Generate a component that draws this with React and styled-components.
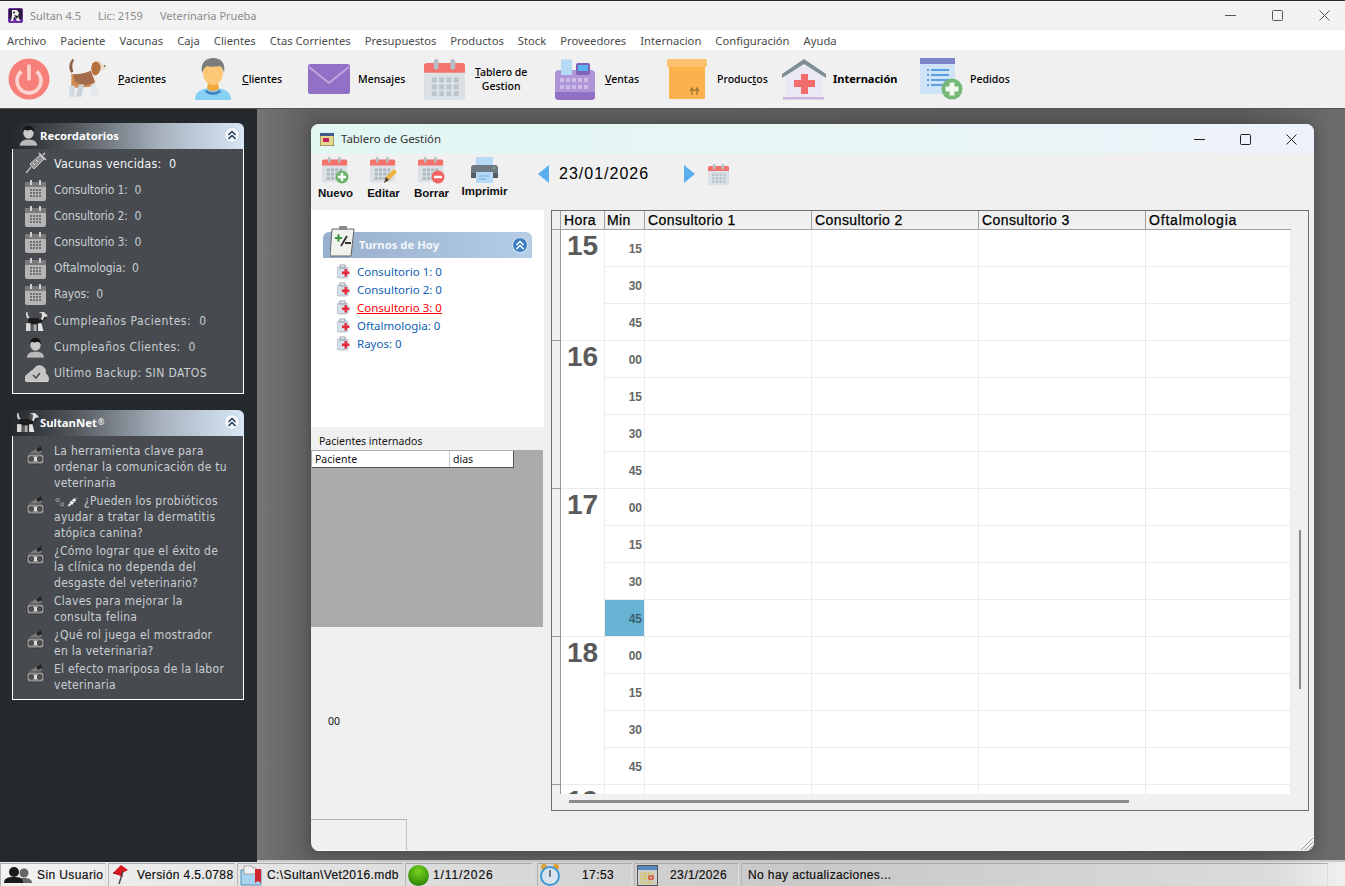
import React from "react";
import styled, { createGlobalStyle } from "styled-components";

const GlobalStyle = createGlobalStyle`
  html, body { margin: 0; padding: 0; background: #24292d; }
  * { box-sizing: border-box; }
`;

const Page = styled.div`
  width: 1345px;
  height: 886px;
  display: flex;
  flex-direction: column;
  overflow: hidden;
  font-family: "Noto Sans", sans-serif;
  background: #f0f0f0;
`;

/* ---------- app chrome ---------- */
const TitleBar = styled.div`
  height: 30px;
  flex: none;
  display: flex;
  align-items: center;
  padding-left: 8px;
  background: #f2f2f2;
  border-top: 1px solid #2a2a2a;
  font-size: 11px;
  color: #8b8b8b;
`;
const TitleText = styled.span`
  margin-left: ${(p) => p.$ml}px;
`;
const WinControls = styled.div`
  margin-left: auto;
  margin-right: -2px;
  display: flex;
  color: #555;
`;
const WinButton = styled.div`
  width: ${(p) => p.$w || 46}px;
  height: 29px;
  display: flex;
  align-items: center;
  justify-content: center;
`;
const MenuBar = styled.div`
  height: 20px;
  flex: none;
  display: flex;
  align-items: center;
  gap: 14px;
  padding-left: 7px;
  background: #fff;
  font-size: 11.24px;
  color: #4a4a4a;
`;
const ToolBar = styled.div`
  height: 59px;
  flex: none;
  display: flex;
  align-items: center;
  padding-left: 8px;
  background: #f0f0f0;
  border-bottom: 1px solid #555;
`;
const ToolItem = styled.div`
  width: ${(p) => p.$w}px;
  flex: none;
  display: flex;
  align-items: center;
  gap: ${(p) => p.$gap ?? 9}px;
`;
const ToolLabel = styled.span`
  font-size: ${(p) => (p.$bold ? 11 : 10.5)}px;
  color: #000;
  text-align: center;
  line-height: 14px;
  font-weight: ${(p) => (p.$bold ? 700 : 500)};
`;

const Workspace = styled.div`
  flex: 1;
  display: flex;
  min-height: 0;
`;

/* ---------- left sidebar ---------- */
const Sidebar = styled.aside`
  width: 257px;
  flex: none;
  padding: 14px 13px 0 12px;
  display: flex;
  flex-direction: column;
  gap: 16px;
  background: #24292d;
`;
const PanelHead = styled.div`
  height: 26px;
  display: flex;
  align-items: center;
  padding: 0 4px 2px ${(p) => p.$pl}px;
  gap: 1px;
  border-radius: 0 6px 0 0;
  background: linear-gradient(90deg, #24292d 0%, #4e5358 25%, #a9b4c0 65%, #d8e6f5 100%);
  color: #fff;
  font-size: 11.3px;
  font-weight: 700;
`;
const HeadMark = styled.sup`
  font-size: 8px;
  line-height: 0;
  font-weight: 400;
`;
const PanelBody = styled.div`
  border: 1px solid #fff;
  border-top: none;
  background: #474b50;
  padding: ${(p) => p.$pad};
  font-family: "DejaVu Sans Condensed", "DejaVu Sans", sans-serif;
`;
const ReminderRow = styled.div`
  height: 26px;
  display: flex;
  align-items: center;
  padding-top: ${(p) => p.$pt ?? 2}px;
  font-size: ${(p) => (p.$bright ? 12.5 : 12)}px;
  letter-spacing: ${(p) => p.$ls ?? 0}px;
  color: ${(p) => (p.$bright ? "#f2f4f5" : "#c9ced2")};
  white-space: pre;
`;
const RowIcon = styled.div`
  width: 41px;
  flex: none;
  padding-left: 12px;
  display: flex;
`;
const NewsItem = styled.div`
  display: flex;
  margin-bottom: 2px;
  font-size: 12px;
  line-height: 16px;
  letter-spacing: 0.28px;
  color: #c9ced2;
`;
const NewsIcon = styled.div`
  width: 41px;
  flex: none;
  padding: 2px 0 0 13px;
`;
const GreyEmoji = styled.span`
  display: inline-block;
  width: 13px;
  font-size: 9px;
  line-height: 1;
  letter-spacing: 0;
  filter: grayscale(1) brightness(1.5);
`;
const EmojiGap = styled.span`
  display: inline-block;
  width: 4px;
`;
const RoundChevron = styled.div`
  margin-left: auto;
  width: 16px;
  height: 16px;
  border-radius: 50%;
  display: flex;
  align-items: center;
  justify-content: center;
  background: ${(p) => (p.$blue ? "#3f7fc4" : "#f4f8fc")};
  border: 1px solid ${(p) => (p.$blue ? "#d8e6f5" : "#c4d4e4")};
  color: ${(p) => (p.$blue ? "#fff" : "#1f3a5a")};
`;

/* ---------- MDI area ---------- */
const Desktop = styled.main`
  flex: 1;
  padding: 15px 31px 10px 54px;
  background: linear-gradient(90deg, #757575 0%, #5f5f5f 5%, #5a5a5a 90%, #6c6c6c 100%);
  border-bottom: 2px solid #c9c9c9;
`;
const ChildWindow = styled.section`
  height: 727px;
  display: flex;
  flex-direction: column;
  position: relative;
  border-radius: 8px;
  background: #f0f0f0;
  box-shadow: 0 0 14px rgba(0, 0, 0, 0.25);
  overflow: hidden;
`;
const ChildTitle = styled.div`
  height: 30px;
  flex: none;
  display: flex;
  align-items: center;
  padding: 0 0 0 9px;
  gap: 7px;
  background: linear-gradient(90deg, #e2f6f2 0%, #e6f6f4 50%, #eef2fa 100%);
  font-size: 11.4px;
  color: #333;
`;
const ChildTitleText = styled.span`
  margin-top: -2px;
`;
const ChildControls = styled.div`
  margin-left: auto;
  display: flex;
  color: #222;
`;
const ChildToolbar = styled.div`
  height: 56px;
  flex: none;
  display: flex;
`;
const ActionButton = styled.div`
  width: ${(p) => p.$w}px;
  flex: none;
  display: flex;
  flex-direction: column;
  align-items: center;
  padding-top: 3px;
`;
const ActionLabel = styled.span`
  margin-top: 1px;
  font-family: "Liberation Sans", sans-serif;
  font-size: 11.5px;
  font-weight: 700;
  color: #111;
  line-height: 14px;
`;
const DateNav = styled.div`
  display: flex;
  align-items: center;
  height: 40px;
  margin-left: 25px;
`;
const DateText = styled.span`
  width: 125px;
  margin-left: 10px;
  font-family: "Liberation Sans", sans-serif;
  font-size: 16px;
  letter-spacing: 1px;
  color: #000;
`;
const DateCalendar = styled.div`
  margin-left: 13px;
`;
const ChildBody = styled.div`
  flex: 1;
  display: flex;
  min-height: 0;
`;
const LeftColumn = styled.div`
  width: 240px;
  flex: none;
  display: flex;
  flex-direction: column;
`;
const TurnosPanel = styled.div`
  width: 233px;
  height: 217px;
  flex: none;
  padding: 22px 12px 0;
  background: #fff;
`;
const TurnosHead = styled.div`
  height: 26px;
  position: relative;
  display: flex;
  align-items: center;
  padding: 0 4px 1px 36px;
  border-radius: 6px 6px 0 0;
  background: linear-gradient(90deg, #98afcc 0%, #b6cde6 100%);
  color: #f2f6fa;
  font-size: 11.3px;
  font-weight: 700;
`;
const NotepadSlot = styled.div`
  position: absolute;
  left: 7px;
  top: -6px;
`;
const TurnoList = styled.div`
  padding: 5px 0 0 14px;
`;
const TurnoRow = styled.div`
  height: 18px;
  display: flex;
  align-items: center;
  gap: 7px;
  padding-bottom: 2px;
  font-size: 11.5px;
  color: ${(p) => (p.$active ? "#f00" : "#0f5eb4")};
`;
const TurnoText = styled.span`
  text-decoration: ${(p) => (p.$active ? "underline" : "none")};
`;
const InternadosLabel = styled.div`
  height: 23px;
  padding: 7px 0 0 8px;
  font-size: 10.5px;
  line-height: 14px;
  color: #111;
`;
const InternadosGrid = styled.div`
  width: 232px;
  height: 177px;
  flex: none;
  padding-top: 1px;
  background: #ababab;
`;
const InternadosHead = styled.div`
  width: 202px;
  height: 17px;
  display: flex;
  margin-left: 1px;
  background: #fff;
  border-right: 1px solid #555;
  border-bottom: 1px solid #555;
  font-size: 10.5px;
  line-height: 16px;
  color: #111;
`;
const InternadosCol = styled.div`
  width: ${(p) => p.$w}px;
  padding-left: 3px;
  border-right: ${(p) => (p.$sep ? "1px solid #ccc" : "none")};
`;
const CounterText = styled.div`
  margin: 87px 0 0 17px;
  font-size: 10.5px;
  line-height: 14px;
  color: #111;
`;
const StatusStub = styled.div`
  width: 96px;
  height: 32px;
  margin-top: auto;
  border-top: 1px solid #b0b0b0;
  border-right: 1px solid #c4c4c4;
  border-bottom: 1px solid #fff;
`;

/* ---------- agenda grid ---------- */
const GridFrame = styled.div`
  width: 758px;
  height: 601px;
  display: flex;
  flex-direction: column;
  background: #f0f0f0;
  border: 1px solid #6e6e6e;
`;
const GridHeader = styled.div`
  height: 19px;
  width: 739px;
  flex: none;
  display: grid;
  grid-template-columns: 9px 44px 40px 167px 167px 167px 145px;
  border-bottom: 1px solid #a0a0a0;
`;
const HeadCell = styled.div`
  font-family: "Liberation Sans", sans-serif;
  font-size: 14px;
  font-weight: 500;
  line-height: 18px;
  letter-spacing: ${(p) => p.$ls ?? 0.4}px;
  color: #000;
  padding-left: ${(p) => p.$pl ?? 3}px;
  border-right: 1px solid #a0a0a0;
  -webkit-text-stroke: 0.25px #000;
  &:last-child {
    border-right: none;
  }
`;
const GridScrollArea = styled.div`
  height: 564px;
  flex: none;
  width: 739px;
  overflow: hidden;
  background: #fff;
`;
const GridBody = styled.div`
  display: grid;
  grid-template-columns: 9px 44px 40px 167px 167px 167px 145px;
  grid-auto-rows: 37px;
`;
const GutterCell = styled.div`
  grid-row: span ${(p) => p.$span};
  background: #f0f0f0;
  border-right: 1px solid #9a9a9a;
  border-bottom: 1px solid #9a9a9a;
`;
const HourCell = styled.div`
  grid-row: span ${(p) => p.$span};
  padding-top: 1px;
  font-family: "Liberation Sans", sans-serif;
  font-size: 28px;
  font-weight: 700;
  line-height: 30px;
  text-align: center;
  color: #5a5a5a;
  border-right: 1px solid #ececec;
  border-bottom: 1px solid #ececec;
`;
const MinCell = styled.div`
  display: flex;
  align-items: center;
  justify-content: flex-end;
  padding: 2px 2px 0 0;
  font-family: "Liberation Sans", sans-serif;
  font-size: 12px;
  font-weight: 700;
  color: ${(p) => (p.$selected ? "#3d5f70" : "#666")};
  background: ${(p) => (p.$selected ? "#68b3d3" : "#fff")};
  border-right: 1px solid #ececec;
  border-bottom: 1px solid #ececec;
`;
const SlotCell = styled.div`
  border-right: 1px solid #ececec;
  border-bottom: 1px solid #ececec;
`;
const VScrollThumb = styled.div`
  position: absolute;
  left: 988px;
  top: 406px;
  width: 2px;
  height: 159px;
  background: #8a8a8a;
`;
const HScrollThumb = styled.div`
  width: 560px;
  height: 3px;
  margin: 6px 0 0 17px;
  background: #8a8a8a;
`;
const ResizeGrip = styled.div`
  position: absolute;
  right: 1px;
  bottom: 1px;
  display: flex;
`;

/* ---------- status bar ---------- */
const StatusBar = styled.footer`
  height: 24px;
  flex: none;
  display: flex;
  align-items: stretch;
  gap: 2px;
  padding-top: 1px;
  background: linear-gradient(90deg, #f2f2f2 0%, #dedede 30%, #c8c8c8 60%, #dcdcdc 95%, #f0f0f0 100%);
`;
const StatusCell = styled.div`
  width: ${(p) => p.$w}px;
  flex: none;
  display: flex;
  align-items: center;
  gap: ${(p) => p.$gap ?? 6}px;
  padding-left: ${(p) => p.$pl ?? 2}px;
  margin-left: ${(p) => p.$ml ?? 0}px;
  border-top: 1px solid #a8a8a8;
  border-left: 1px solid #b4b4b4;
  border-right: 1px solid #dcdcdc;
  font-family: "Liberation Sans", sans-serif;
  font-size: 12px;
  font-weight: 500;
  letter-spacing: ${(p) => p.$ls ?? 0.4}px;
  color: #111;
  white-space: nowrap;
  -webkit-text-stroke: 0.2px #111;
`;

/* ---------- drawings ---------- */
const Svg = ({ w, h, vb, children }) => (
  <svg width={w} height={h} viewBox={vb || `0 0 ${w} ${h}`} style={{ display: "block", flex: "none" }}>
    {children}
  </svg>
);

const PowerIcon = () => (
  <Svg w={42} h={42}>
    <circle cx="21" cy="21" r="20.5" fill="#f8807a" />
    <path d="M13.5 13.5a12 12 0 1 0 15 0" fill="none" stroke="#fcd5d2" strokeWidth="3.6" />
    <path d="M21 8v13" stroke="#fcd5d2" strokeWidth="3.6" strokeLinecap="round" />
  </Svg>
);

const BeagleIcon = () => (
  <Svg w={40} h={42} vb="30 18 120 126">
    <path d="M45 20C34 30 30 46 39 62l7-3C41 46 42 34 48 25z" fill="#8c5f45" />
    <path d="M40 66c20 2 42-2 58-10l14 34-14 14-58 4z" fill="#d08b55" />
    <path d="M46 66c18 2 38-2 52-10l12 34c-18 14-50 10-60-4z" fill="#a56b4c" />
    <path d="M108 30c10-10 24-2 28 10l10 2c2 6-6 10-14 12l-20 4z" fill="#ecdcc8" />
    <path d="M104 34c8-10 22-4 24 10 0 16-10 28-20 26-10-8-10-26-4-36z" fill="#b5703f" />
    <path d="M34 104l16-4v34H34z" fill="#d3dce1" />
    <path d="M62 98l16-2-8 38H54z" fill="#c9d3d9" />
    <path d="M98 98l14-4 12 40h-24z" fill="#e2e8ec" />
    <circle cx="140" cy="42" r="2.500" fill="#444" />
  </Svg>
);

const PersonIcon = () => (
  <Svg w={40} h={42}>
    <path d="M2 42c0-9 7-12 18-12s18 3 18 12z" fill="#86cff5" />
    <path d="M14 30c1 4 11 4 12 0l-1-5H15z" fill="#f3a73f" />
    <path d="M14 32c2 3 10 3 12 0l2 1c-2 5-14 5-16 0z" fill="#3f7fb8" />
    <ellipse cx="20" cy="15" rx="10" ry="12" fill="#fcc777" />
    <path d="M9 15C7 5 13 0 20 0c8 0 13 5 11 15-1-4-2-6-4-7-5 1-10 1-13 0-3 2-4 4-5 7z" fill="#7c7c7c" />
  </Svg>
);

const EnvelopeIcon = () => (
  <Svg w={42} h={30}>
    <rect width="42" height="30" rx="2.5" fill="#9270c6" />
    <path d="M1 3l20 16L41 3" fill="none" stroke="#bba6e0" strokeWidth="2" />
  </Svg>
);

const CalendarGlyph = ({ w, h }) => (
  <Svg w={w} h={h} vb="0 0 42 42">
    <rect y="4" width="42" height="38" rx="3" fill="#dbe1e5" />
    <path d="M0 14V7a3 3 0 0 1 3-3h36a3 3 0 0 1 3 3v7z" fill="#f4736d" />
    <rect x="10" y="0" width="5" height="11" rx="2.5" fill="#b6bfc5" />
    <rect x="27" y="0" width="5" height="11" rx="2.5" fill="#b6bfc5" />
    {[8, 15.5, 23, 30.5].map((x) =>
      [19, 26, 33].map((y) => <rect key={`${x}-${y}`} x={x} y={y} width="5" height="5" fill="#bcc5cb" />)
    )}
  </Svg>
);

const RegisterIcon = () => (
  <Svg w={41} h={41}>
    <rect y="11" width="40" height="30" rx="4" fill="#ae95d8" />
    <path d="M0 33h40v4a4 4 0 0 1-4 4H4a4 4 0 0 1-4-4z" fill="#8f70c4" />
    <path d="M7 0l2 1 2-1 2 1 2-1 2 1v15H6V1z" fill="#b6d9f6" />
    <rect x="21" y="4" width="14" height="12" rx="2" fill="#8160b8" />
    <rect x="23" y="6" width="10" height="6" fill="#58b4f0" />
    {[5, 11, 17, 23, 29].map((x) =>
      [19, 26].map((y) => <rect key={`${x}-${y}`} x={x} y={y} width="4" height="4" fill="#cdbce8" />)
    )}
  </Svg>
);

const BoxIcon = () => (
  <Svg w={40} h={40}>
    <rect x="2" y="6" width="36" height="34" rx="1.5" fill="#fbb24c" />
    <rect width="40" height="8" rx="1.5" fill="#fdc26d" />
    <path d="M25 36v-6m-2 2l2-3 2 3m3 4v-6m-2 2l2-3 2 3" stroke="#a97a34" strokeWidth="1.4" fill="none" />
  </Svg>
);

const HospitalIcon = () => (
  <Svg w={44} h={41}>
    <path d="M4 16L22 4l18 12v23H4z" fill="#ece8f3" />
    <path d="M0 15L22 0l22 15v4L22 5 0 19z" fill="#7f8e95" />
    <path d="M19 15h7v6h7v7h-7v7h-7v-7h-7v-7h7z" fill="#f46d6d" />
    <rect x="1" y="38" width="41" height="2.5" fill="#c8b8e0" />
  </Svg>
);

const OrderIcon = () => (
  <Svg w={43} h={42}>
    <rect width="35" height="36" fill="#cfe3f8" />
    <rect width="35" height="6" fill="#7d86c8" />
    {[11, 16, 21, 26].map((y) => (
      <g key={y}>
        <rect x="7" y={y} width="2" height="2" fill="#5c9fe0" />
        <rect x="11" y={y} width="18" height="2" fill="#5c9fe0" />
      </g>
    ))}
    <circle cx="32" cy="31" r="10.5" fill="#74b878" />
    <path d="M29.5 24.5h5v4h4v5h-4v4h-5v-4h-4v-5h4z" fill="#eef6ee" />
  </Svg>
);

const AppLogo = () => (
  <Svg w={15} h={15}>
    <rect width="15" height="15" rx="2" fill="#6a2ea8" />
    <rect x="1" y="1" width="13" height="10" fill="#2a1a3a" />
    <path d="M4 2h5l2 3-1 3 2 5H9L7 9H6l-1 4H3l1-6z" fill="#f2f2f2" />
    <circle cx="6" cy="4.500" r="1" fill="#111" />
    <path d="M6 7l4 1-1 3z" fill="#111" />
  </Svg>
);

const Chevrons = () => (
  <Svg w={10} h={10}>
    <path d="M1.5 5L5 1.5 8.5 5M1.5 9L5 5.5 8.5 9" fill="none" stroke="currentColor" strokeWidth="1.5" />
  </Svg>
);

const SyringeIcon = () => (
  <Svg w={22} h={22}>
    <path d="M1 21l5-6" stroke="#c8c8c8" strokeWidth="1.2" />
    <path d="M5 12L15 3l4 4-10 10z" fill="#8f8f8f" stroke="#d0d0d0" strokeWidth="1" />
    <path d="M14 1l7 7M18 3l2-2" stroke="#d0d0d0" strokeWidth="1.4" />
    <path d="M8 11l2 2M11 8l2 2" stroke="#e8e8e8" strokeWidth="1" />
  </Svg>
);

const GreyCalendar = () => (
  <Svg w={21} h={21}>
    <rect y="2" width="21" height="19" rx="2" fill="#b5b5b5" />
    <path d="M0 7V4a2 2 0 0 1 2-2h17a2 2 0 0 1 2 2v3z" fill="#7a7a7a" />
    <rect x="5" y="0" width="2" height="5" fill="#d0d0d0" />
    <rect x="14" y="0" width="2" height="5" fill="#d0d0d0" />
    {[5, 8, 11, 14].map((x) =>
      [9, 12, 15].map((y) => <rect key={`${x}-${y}`} x={x} y={y} width="2" height="2" fill="#6e6e6e" />)
    )}
  </Svg>
);

const GreyDog = ({ w = 23, h = 21 }) => (
  <Svg w={w} h={h} vb="26 14 70 62">
    <path d="M30 16c-3 10 1 20 8 22l3-4c-5-4-7-11-7-18z" fill="#d2d2d2" />
    <path d="M36 34h28l14-12 12 12-18 18-36 4z" fill="#1c1c1c" />
    <path d="M70 16h14l12 12-12 4-4 10-10-8z" fill="#dcdcdc" />
    <path d="M68 18c-5 7-3 18 4 22 5-5 7-14 4-22z" fill="#4a4a4a" />
    <path d="M29 50h14v24H29z" fill="#d8d8d8" />
    <path d="M52 54h9v20h-9z" fill="#b0b0b0" />
    <path d="M66 50h10l6 24H66z" fill="#e6e6e6" />
    <path d="M44 54h7v20h-7z" fill="#5c5c5c" />
  </Svg>
);

const GreyUser = ({ size = 21 }) => (
  <Svg w={size} h={size} vb="0 0 21 22">
    <path d="M1 22c0-5 4-7 9.500-7S20 17 20 22z" fill="#b9b9b9" stroke="#222" strokeWidth=".6" />
    <ellipse cx="10.500" cy="8" rx="5.500" ry="6.500" fill="#c9c9c9" />
    <path d="M5 8C4 3 7 1 10.500 1S17 3 16 8c-1-2-2-3-3-3-3 1-5 1-6 0-1 0-2 1-2 3z" fill="#161616" />
  </Svg>
);

const CloudIcon = () => (
  <Svg w={24} h={18}>
    <path d="M1 17.500c-2-4 0-7 3-8 1-2 3-3 4-3 2-4 6-6 9-4 3 1 4 4 3 7 3 1 4 5 3 8z" fill="#c4c4c4" stroke="#e4e4e4" strokeWidth=".8" />
    <path d="M8 11l3 3 4-5" fill="none" stroke="#444" strokeWidth="1.400" />
  </Svg>
);

const NewsGlyph = () => (
  <Svg w={19} h={20}>
    <path d="M2 9l11-7 3 5-2 2z" fill="#7c7c7c" />
    <path d="M10 4l5-3 1 4-4 2z" fill="#262626" />
    <rect x="1" y="9" width="17" height="10" rx="2.500" fill="#8f8f8f" stroke="#333" strokeWidth=".8" />
    <rect x="5" y="12" width="9" height="4" fill="#dcdcdc" />
    <circle cx="5.500" cy="14" r="2.200" fill="#555" stroke="#222" strokeWidth=".8" />
    <circle cx="13.500" cy="14" r="2.200" fill="#555" stroke="#222" strokeWidth=".8" />
  </Svg>
);

const MiniCalendar = ({ children }) => (
  <Svg w={28} h={28}>
    <g transform="scale(.6)">
      <rect y="4" width="42" height="38" rx="3" fill="#dbe1e5" />
      <path d="M0 14V7a3 3 0 0 1 3-3h36a3 3 0 0 1 3 3v7z" fill="#f4736d" />
      <rect x="10" y="0" width="4" height="10" rx="2" fill="#b6bfc5" />
      <rect x="27" y="0" width="4" height="10" rx="2" fill="#b6bfc5" />
      {[8, 15, 22, 29].map((x) =>
        [19, 26, 33].map((y) => <rect key={`${x}-${y}`} x={x} y={y} width="5" height="5" fill="#aeb8bf" />)
      )}
    </g>
    {children}
  </Svg>
);

const PrinterIcon = () => (
  <Svg w={27} h={26}>
    <rect x="5" y="0" width="17" height="8" fill="#b5d9f7" />
    <path d="M0 11a3 3 0 0 1 3-3h21a3 3 0 0 1 3 3v10H0z" fill="#6e7880" />
    <rect x="0" y="16" width="27" height="5" fill="#545c63" />
    <rect x="5" y="15" width="17" height="11" fill="#b5d9f7" />
    <path d="M8 19h10M8 22h7" stroke="#6ea6d8" strokeWidth="1" />
    <circle cx="23" cy="11" r="1" fill="#6fd08a" />
  </Svg>
);

const ArrowLeft = () => (
  <Svg w={11} h={18}>
    <path d="M11 0v18L0 9z" fill="#59aef0" />
  </Svg>
);
const ArrowRight = () => (
  <Svg w={11} h={18}>
    <path d="M0 0v18l11-9z" fill="#59aef0" />
  </Svg>
);

const NotepadIcon = () => (
  <Svg w={26} h={32}>
    <path d="M2 3h22l-3 27H0z" fill="#f0f2ee" stroke="#666" strokeWidth="1" />
    <rect x="9" y="0" width="8" height="4" rx="1" fill="#8a8a8a" />
    <path d="M5 12h7M8.500 8.500v7" stroke="#3e9a3e" strokeWidth="2.200" />
    <path d="M11 20l6-10M15 17h6" stroke="#333" strokeWidth="1.800" />
  </Svg>
);

const CaseIcon = () => (
  <Svg w={13} h={15}>
    <rect x="0" y="3" width="11" height="11" rx="2" fill="#d6dee8" stroke="#97a3b3" strokeWidth=".6" />
    <rect x="3" y="1" width="5" height="3" fill="none" stroke="#97a3b3" />
    <path d="M7.500 5h2.500v2.500h2.500V10H10v2.500H7.500V10H5V7.500h2.500z" fill="#e62b3a" />
  </Svg>
);

const WinMin = () => (
  <Svg w={11} h={11}><path d="M0 5.500h11" stroke="currentColor" /></Svg>
);
const WinMax = () => (
  <Svg w={11} h={11}><rect x=".5" y=".5" width="10" height="10" rx="1" fill="none" stroke="currentColor" /></Svg>
);
const WinClose = () => (
  <Svg w={11} h={11}><path d="M.5.500l10 10M10.500.500l-10 10" stroke="currentColor" /></Svg>
);

const Grip = () => (
  <Svg w={12} h={12}>
    <path d="M0 12L12 0M4 12l8-8M8 12l4-4" stroke="#9a9a9a" strokeWidth="1" />
  </Svg>
);

const UsersIcon = () => (
  <Svg w={30} h={18}>
    <circle cx="21" cy="7" r="4.500" fill="#666" />
    <path d="M14 17c0-4 3-5 7-5s8 1 8 5z" fill="#666" />
    <circle cx="11" cy="6" r="5" fill="#1a1a1a" />
    <path d="M1 17c0-5 4-6 10-6s9 1 9 6z" fill="#1a1a1a" />
  </Svg>
);
const FlagIcon = () => (
  <Svg w={18} h={20}>
    <path d="M2 8L10 0l7 5-6 3 1 4z" fill="#d9181f" />
    <path d="M12 6l-4 13" stroke="#444" strokeWidth="1.400" />
    <path d="M2 8l5 1" stroke="#8b0c10" strokeWidth="1" />
  </Svg>
);
const FolderIcon = () => (
  <Svg w={24} h={22}>
    <path d="M1 6h20v15H1z" fill="#a8d4f0" stroke="#3d7ea8" strokeWidth=".8" />
    <path d="M4 2h8l1 2h3v6H4z" fill="#f0f0f0" stroke="#999" strokeWidth=".8" />
    <path d="M15 5h6v14l-3-2-3 2z" fill="#cf2630" />
  </Svg>
);
const GreenBall = () => (
  <Svg w={21} h={21}>
    <defs>
      <radialGradient id="ball" cx="50%" cy="30%" r="70%">
        <stop offset="0%" stopColor="#79d420" />
        <stop offset="100%" stopColor="#2c8606" />
      </radialGradient>
    </defs>
    <circle cx="10.500" cy="10.500" r="10.500" fill="url(#ball)" />
  </Svg>
);
const ClockIcon = () => (
  <Svg w={20} h={24}>
    <circle cx="4" cy="4" r="3" fill="#e0a030" />
    <circle cx="16" cy="4" r="3" fill="#e0a030" />
    <circle cx="10" cy="13" r="9" fill="#d6e2ec" stroke="#3a9ad8" strokeWidth="2" />
    <path d="M10 7v6h-1" stroke="#333" strokeWidth="1.200" fill="none" />
  </Svg>
);
const GridCalIcon = () => (
  <Svg w={21} h={21}>
    <rect x=".5" y=".5" width="20" height="20" fill="#cfcfcf" stroke="#555" />
    <rect x="1" y="1" width="19" height="4" fill="#5a88c0" />
    <path d="M4 8h12v10H4zM8 8v10M12 8v10M4 11h12M4 14h12" fill="none" stroke="#d8c040" strokeWidth=".8" />
    <rect x="12" y="11" width="4" height="3" fill="none" stroke="#d02020" />
  </Svg>
);

/* ---------- data ---------- */
const menus = ["Archivo", "Paciente", "Vacunas", "Caja", "Clientes", "Ctas Corrientes", "Presupuestos", "Productos", "Stock", "Proveedores", "Internacion", "Configuración", "Ayuda"];

const reminders = [
  { icon: <SyringeIcon />, text: "Vacunas vencidas:  0", bright: true, pt: 0, ls: 0.2 },
  { icon: <GreyCalendar />, text: "Consultorio 1:  0", ls: -0.1 },
  { icon: <GreyCalendar />, text: "Consultorio 2:  0", ls: -0.1 },
  { icon: <GreyCalendar />, text: "Consultorio 3:  0", ls: -0.1 },
  { icon: <GreyCalendar />, text: "Oftalmologia:  0", ls: -0.1 },
  { icon: <GreyCalendar />, text: "Rayos:  0", ls: -0.1 },
  { icon: <GreyDog />, text: "Cumpleaños Pacientes:  0", pt: 4, ls: 0.55 },
  { icon: <GreyUser />, text: "Cumpleaños Clientes:  0", pt: 4, ls: 0.45 },
  { icon: <CloudIcon />, text: "Ultimo Backup: SIN DATOS", pt: 4, ls: 0.4 },
];

const news = [
  { text: "La herramienta clave para ordenar la comunicación de tu veterinaria" },
  { emoji: ["🐾", "💉"], text: "¿Pueden los probióticos ayudar a tratar la dermatitis atópica canina?" },
  { text: "¿Cómo lograr que el éxito de la clínica no dependa del desgaste del veterinario?" },
  { text: "Claves para mejorar la consulta felina" },
  { text: "¿Qué rol juega el mostrador en la veterinaria?" },
  { text: "El efecto mariposa de la labor veterinaria" },
];

const turnos = ["Consultorio 1: 0", "Consultorio 2: 0", "Consultorio 3: 0", "Oftalmologia: 0", "Rayos: 0"];

const hours = [
  { hour: "15", mins: ["15", "30", "45"] },
  { hour: "16", mins: ["00", "15", "30", "45"] },
  { hour: "17", mins: ["00", "15", "30", "45"] },
  { hour: "18", mins: ["00", "15", "30", "45"] },
  { hour: "19", mins: [""] },
];

const slots = [0, 1, 2, 3];

export default function App() {
  return (
    <Page>
      <GlobalStyle />
      <TitleBar>
        <AppLogo />
        <TitleText $ml={7}>Sultan 4.5</TitleText>
        <TitleText $ml={17}>Lic: 2159</TitleText>
        <TitleText $ml={17}>Veterinaria Prueba</TitleText>
        <WinControls>
          <WinButton><WinMin /></WinButton>
          <WinButton $w={48}><WinMax /></WinButton>
          <WinButton><WinClose /></WinButton>
        </WinControls>
      </TitleBar>

      <MenuBar>
        {menus.map((m) => (
          <span key={m}>{m}</span>
        ))}
      </MenuBar>

      <ToolBar>
        <ToolItem $w={60}><PowerIcon /></ToolItem>
        <ToolItem $w={125} $gap={10}><BeagleIcon /><ToolLabel><u>P</u>acientes</ToolLabel></ToolItem>
        <ToolItem $w={115}><PersonIcon /><ToolLabel><u>C</u>lientes</ToolLabel></ToolItem>
        <ToolItem $w={116} $gap={8}><EnvelopeIcon /><ToolLabel>Mensajes</ToolLabel></ToolItem>
        <ToolItem $w={131} $gap={10}><CalendarGlyph w={41} h={41} /><ToolLabel><u>T</u>ablero de<br />Gestion</ToolLabel></ToolItem>
        <ToolItem $w={112}><RegisterIcon /><ToolLabel><u>V</u>entas</ToolLabel></ToolItem>
        <ToolItem $w={115} $gap={10}><BoxIcon /><ToolLabel>Produc<u>t</u>os</ToolLabel></ToolItem>
        <ToolItem $w={138} $gap={7}><HospitalIcon /><ToolLabel $bold>Internación</ToolLabel></ToolItem>
        <ToolItem $w={100} $gap={7}><OrderIcon /><ToolLabel>Pedidos</ToolLabel></ToolItem>
      </ToolBar>

      <Workspace>
        <Sidebar>
          <div>
            <PanelHead $pl={6}>
              <GreyUser size={21} />
              Recordatorios
              <RoundChevron><Chevrons /></RoundChevron>
            </PanelHead>
            <PanelBody $pad="1px 0 9px">
              {reminders.map((r) => (
                <ReminderRow key={r.text} $bright={r.bright} $pt={r.pt} $ls={r.ls}>
                  <RowIcon>{r.icon}</RowIcon>
                  {r.text}
                </ReminderRow>
              ))}
            </PanelBody>
          </div>
          <div>
            <PanelHead $pl={4}>
              <GreyDog />
              SultanNet<HeadMark>®</HeadMark>
              <RoundChevron><Chevrons /></RoundChevron>
            </PanelHead>
            <PanelBody $pad="7px 13px 4px 0">
              {news.map((n) => (
                <NewsItem key={n.text}>
                  <NewsIcon><NewsGlyph /></NewsIcon>
                  <span>
                    {n.emoji && n.emoji.map((e) => <GreyEmoji key={e}>{e}</GreyEmoji>)}
                    {n.emoji && <EmojiGap />}
                    {n.text}
                  </span>
                </NewsItem>
              ))}
            </PanelBody>
          </div>
        </Sidebar>

        <Desktop>
          <ChildWindow>
            <ChildTitle>
              <Svg w={14} h={13}>
                <rect width="14" height="13" fill="#e8d88a" stroke="#444" strokeWidth=".8" />
                <rect width="14" height="3" fill="#3d5a8a" />
                <rect x="3" y="5" width="6" height="4" fill="#c02060" />
              </Svg>
              <ChildTitleText>Tablero de Gestión</ChildTitleText>
              <ChildControls>
                <WinButton><WinMin /></WinButton>
                <WinButton><WinMax /></WinButton>
                <WinButton><WinClose /></WinButton>
              </ChildControls>
            </ChildTitle>

            <ChildToolbar>
              <ActionButton $w={49}>
                <MiniCalendar>
                  <circle cx="20" cy="20" r="6.500" fill="#6eb56e" />
                  <path d="M18.800 16h2.400v2.800H24v2.400h-2.800V24h-2.400v-2.800H16v-2.400h2.800z" fill="#fff" />
                </MiniCalendar>
                <ActionLabel>Nuevo</ActionLabel>
              </ActionButton>
              <ActionButton $w={47}>
                <MiniCalendar>
                  <path d="M14 26l2-6 8-8 3 3-8 8z" fill="#f2b33d" />
                  <path d="M14 26l2-6 3 3z" fill="#444" />
                </MiniCalendar>
                <ActionLabel>Editar</ActionLabel>
              </ActionButton>
              <ActionButton $w={49}>
                <MiniCalendar>
                  <circle cx="20" cy="20" r="6.500" fill="#f0655f" />
                  <rect x="16" y="18.800" width="8" height="2.400" fill="#fff" />
                </MiniCalendar>
                <ActionLabel>Borrar</ActionLabel>
              </ActionButton>
              <ActionButton $w={57}>
                <PrinterIcon />
                <ActionLabel>Imprimir</ActionLabel>
              </ActionButton>
              <DateNav>
                <ArrowLeft />
                <DateText>23/01/2026</DateText>
                <ArrowRight />
                <DateCalendar><CalendarGlyph w={21} h={21} /></DateCalendar>
              </DateNav>
            </ChildToolbar>

            <ChildBody>
              <LeftColumn>
                <TurnosPanel>
                  <TurnosHead>
                    <NotepadSlot><NotepadIcon /></NotepadSlot>
                    Turnos de Hoy
                    <RoundChevron $blue><Chevrons /></RoundChevron>
                  </TurnosHead>
                  <TurnoList>
                    {turnos.map((t, i) => (
                      <TurnoRow key={t} $active={i === 2}>
                        <CaseIcon />
                        <TurnoText $active={i === 2}>{t}</TurnoText>
                      </TurnoRow>
                    ))}
                  </TurnoList>
                </TurnosPanel>
                <InternadosLabel>Pacientes internados</InternadosLabel>
                <InternadosGrid>
                  <InternadosHead>
                    <InternadosCol $w={138} $sep>Paciente</InternadosCol>
                    <InternadosCol $w={63}>dias</InternadosCol>
                  </InternadosHead>
                </InternadosGrid>
                <CounterText>00</CounterText>
                <StatusStub />
              </LeftColumn>

              <GridFrame>
                <GridHeader>
                  <HeadCell $pl={0} />
                  <HeadCell>Hora</HeadCell>
                  <HeadCell $pl={2}>Min</HeadCell>
                  <HeadCell>Consultorio 1</HeadCell>
                  <HeadCell>Consultorio 2</HeadCell>
                  <HeadCell>Consultorio 3</HeadCell>
                  <HeadCell $ls={0.8}>Oftalmologia</HeadCell>
                </GridHeader>
                <GridScrollArea>
                  <GridBody>
                    {hours.map(({ hour, mins }) =>
                      mins.map((min, i) => (
                        <React.Fragment key={hour + min}>
                          {i === 0 && <GutterCell $span={mins.length} />}
                          {i === 0 && <HourCell $span={mins.length}>{hour}</HourCell>}
                          <MinCell $selected={hour === "17" && min === "45"}>{min}</MinCell>
                          {slots.map((s) => (
                            <SlotCell key={s} />
                          ))}
                        </React.Fragment>
                      ))
                    )}
                  </GridBody>
                </GridScrollArea>
                <HScrollThumb />
              </GridFrame>
            </ChildBody>

            <VScrollThumb />
            <ResizeGrip><Grip /></ResizeGrip>
          </ChildWindow>
        </Desktop>
      </Workspace>

      <StatusBar>
        <StatusCell $w={106} $gap={4}><UsersIcon />Sin Usuario</StatusCell>
        <StatusCell $w={127} $gap={8}><FlagIcon />Versión 4.5.0788</StatusCell>
        <StatusCell $w={166} $gap={3}><FolderIcon />C:\Sultan\Vet2016.mdb</StatusCell>
        <StatusCell $w={127} $gap={4} $ls={0.9}><GreenBall />1/11/2026</StatusCell>
        <StatusCell $w={95} $gap={22} $ml={3}><ClockIcon />17:53</StatusCell>
        <StatusCell $w={105} $gap={12}><GridCalIcon />23/1/2026</StatusCell>
        <StatusCell $w={587} $pl={6}>No hay actualizaciones...</StatusCell>
      </StatusBar>
    </Page>
  );
}
